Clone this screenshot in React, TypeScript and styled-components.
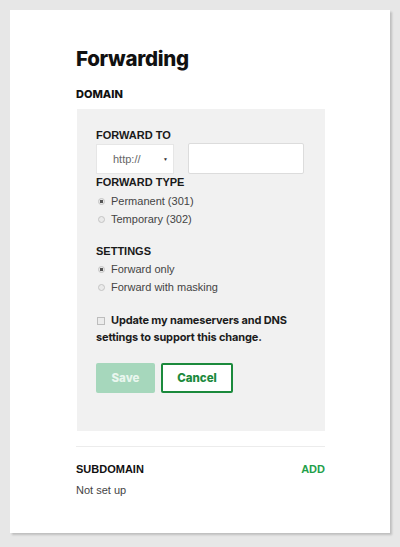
import React from 'react';
import styled, { createGlobalStyle } from 'styled-components';

const Global = createGlobalStyle`
  html, body {
    margin: 0;
    padding: 0;
    background: #e7e7e7;
  }
  body {
    font-family: "Liberation Sans", Arial, sans-serif;
  }
`;

const Page = styled.div`
  padding: 10px;
  width: 400px;
  height: 547px;
  box-sizing: border-box;
`;

const Card = styled.div`
  width: 380px;
  height: 523px;
  box-sizing: border-box;
  background: #fff;
  box-shadow: 2px 2px 2px rgba(0, 0, 0, 0.18);
  padding: 36px 65px 0 66px;
  display: flex;
  flex-direction: column;
`;

const Title = styled.h1`
  margin: 0;
  font-family: Inter, "DejaVu Sans", sans-serif;
  font-weight: 800;
  font-size: 20.5px;
  line-height: 26px;
  letter-spacing: -0.3px;
  color: #111;
`;

const SectionHead = styled.div<{ $top: number }>`
  display: flex;
  justify-content: space-between;
  align-items: center;
  margin-top: ${({ $top }) => `${$top}px`};
`;

const SectionTitle = styled.div<{ $geo?: boolean }>`
  font-family: ${({ $geo }) => ($geo ? 'Inter, "DejaVu Sans", sans-serif' : '"Liberation Sans", Arial, sans-serif')};
  font-weight: ${({ $geo }) => ($geo ? 800 : 700)};
  font-size: 11px;
  line-height: 14px;
  color: #111;
`;

const AddLink = styled.a`
  font-weight: 700;
  font-size: 11px;
  line-height: 14px;
  color: #1fa04a;
  text-decoration: none;
`;

const Panel = styled.div`
  margin: 8px 0 0 1px;
  background: #f1f1f1;
  padding: 19px 19px 38px 19px;
  display: flex;
  flex-direction: column;
`;

const Label = styled.div<{ $top: number }>`
  margin-top: ${({ $top }) => `${$top}px`};
  font-weight: 700;
  font-size: 11px;
  line-height: 14px;
  color: #1a1a1a;
`;

const FieldRow = styled.div`
  display: flex;
  gap: 14px;
  margin-top: 2px;
`;

const Select = styled.div`
  width: 78px;
  height: 30px;
  box-sizing: border-box;
  background: #fff;
  border: 1px solid #e6e6e6;
  display: flex;
  align-items: center;
  justify-content: space-between;
  padding: 0 5px 0 16px;
  font-size: 11px;
  color: #666;
`;

const Caret = styled.span`
  font-size: 5px;
  color: #333;
`;

const TextInput = styled.input`
  width: 116px;
  height: 31px;
  box-sizing: border-box;
  margin: -1px 0 0;
  background: #fff;
  border: 1px solid #dcdcdc;
  border-radius: 2px;
  outline: none;
`;

const OptionList = styled.div<{ $top: number }>`
  margin-top: ${({ $top }) => `${$top}px`};
  display: flex;
  flex-direction: column;
`;

const Option = styled.div`
  display: flex;
  align-items: center;
  gap: 6px;
  padding-left: 2px;
  font-size: 11px;
  line-height: 17.5px;
  color: #444;
`;

const Radio = styled.span<{ $on?: boolean }>`
  width: 7px;
  height: 7px;
  box-sizing: border-box;
  border-radius: 50%;
  border: 1px solid #c4c4c4;
  background: ${({ $on }) => ($on ? 'radial-gradient(circle, #555 0 1.6px, #e9e9e9 2px)' : '#eaeaea')};
  flex: none;
`;

const CheckText = styled.div`
  margin-top: 16px;
  font-family: Inter, "DejaVu Sans", sans-serif;
  font-weight: 700;
  font-size: 11px;
  line-height: 17px;
  letter-spacing: -0.15px;
  color: #1c1c1c;
`;

const Box = styled.span`
  display: inline-block;
  width: 8px;
  height: 8px;
  box-sizing: border-box;
  border: 1px solid #bdbdbd;
  background: #ececec;
  margin: 0 6px 0 1px;
  vertical-align: -0.5px;
`;

const Buttons = styled.div`
  display: flex;
  gap: 6px;
  margin-top: 17px;
`;

const Button = styled.button<{ $primary?: boolean }>`
  height: 30px;
  box-sizing: border-box;
  width: ${({ $primary }) => ($primary ? '59px' : '72px')};
  font-family: Inter, "DejaVu Sans", sans-serif;
  font-weight: 800;
  font-size: 11.5px;
  border-radius: 2px;
  cursor: pointer;
  background: ${({ $primary }) => ($primary ? '#a6d7bc' : '#fff')};
  color: ${({ $primary }) => ($primary ? '#e9f6ee' : '#1b8a3c')};
  border: ${({ $primary }) => ($primary ? 'none' : '2px solid #1b8a3c')};
`;

const Divider = styled.hr`
  margin: 15px 0 0;
  border: none;
  border-top: 1px solid #ececec;
`;

const Muted = styled.div`
  margin-top: 6px;
  font-size: 11px;
  line-height: 16px;
  color: #444;
`;

export default function App() {
  return (
    <>
      <Global />
      <Page>
        <Card>
          <Title>Forwarding</Title>
          <SectionHead $top={15}>
            <SectionTitle $geo>DOMAIN</SectionTitle>
          </SectionHead>
          <Panel>
            <Label $top={0}>FORWARD TO</Label>
            <FieldRow>
              <Select>
                <span>http://</span>
                <Caret>▼</Caret>
              </Select>
              <TextInput type="text" />
            </FieldRow>
            <Label $top={1}>FORWARD TYPE</Label>
            <OptionList $top={4}>
              <Option><Radio $on />Permanent (301)</Option>
              <Option><Radio />Temporary (302)</Option>
            </OptionList>
            <Label $top={16}>SETTINGS</Label>
            <OptionList $top={3}>
              <Option><Radio $on />Forward only</Option>
              <Option><Radio />Forward with masking</Option>
            </OptionList>
            <CheckText>
              <Box />Update my nameservers and DNS settings to support this change.
            </CheckText>
            <Buttons>
              <Button $primary>Save</Button>
              <Button>Cancel</Button>
            </Buttons>
          </Panel>
          <Divider />
          <SectionHead $top={15}>
            <SectionTitle>SUBDOMAIN</SectionTitle>
            <AddLink href="#">ADD</AddLink>
          </SectionHead>
          <Muted>Not set up</Muted>
        </Card>
      </Page>
    </>
  );
}
